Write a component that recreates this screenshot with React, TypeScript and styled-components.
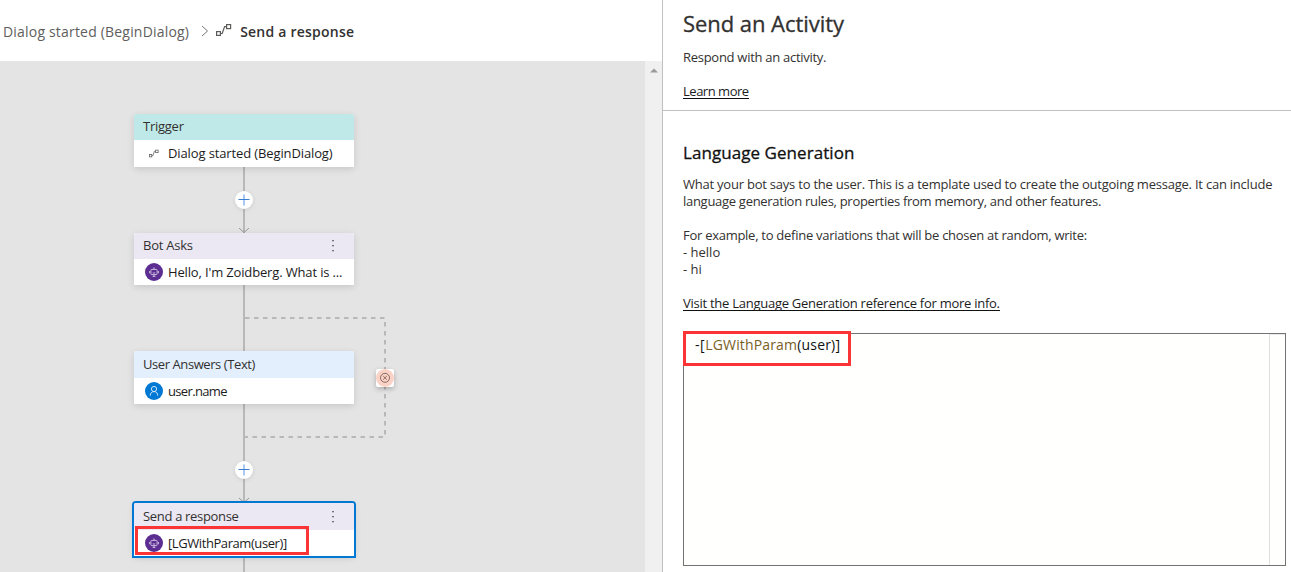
import React from "react";
import styled, { createGlobalStyle } from "styled-components";

const Global = createGlobalStyle`
  * { box-sizing: border-box; }
  body { margin: 0; background: #fff; overflow: hidden; }
`;

const ui = `"Segoe UI", "Open Sans", "Noto Sans", sans-serif`;

const Shell = styled.div`
  display: flex;
  width: 1291px;
  height: 572px;
  overflow: hidden;
  font-family: ${ui};
  color: #323130;
`;

const Editor = styled.section`
  display: flex;
  flex-direction: column;
  width: 662px;
  flex: none;
`;

const Breadcrumbs = styled.nav`
  display: flex;
  align-items: center;
  height: 61px;
  padding: 2px 0 0 3px;
`;

const Text = styled.span<{ $size?: number; $ls?: number; $weight?: number; $color?: string; $stroke?: number }>`
  font-size: ${(p) => p.$size ?? 13}px;
  letter-spacing: ${(p) => p.$ls ?? 0}px;
  font-weight: ${(p) => p.$weight ?? 400};
  color: ${(p) => p.$color ?? "inherit"};
  -webkit-text-stroke: ${(p) => p.$stroke ?? 0}px currentColor;
  white-space: pre;
`;

const CrumbChevron = styled.svg`
  flex: none;
  margin: 0 7px 2px 12px;
`;

const CrumbIcon = styled.svg`
  flex: none;
  margin: 0 8px 3px 0;
`;

const Work = styled.div`
  display: flex;
  flex: 1;
`;

const Canvas = styled.div`
  position: relative;
  width: 645px;
  background: #e4e4e4;
  overflow: hidden;
`;

const ScrollTrack = styled.div`
  display: flex;
  justify-content: center;
  width: 17px;
  padding-top: 7px;
  background: #f0f0f0;
`;

const Edges = styled.svg`
  position: absolute;
  left: 0;
  top: 0;
`;

const Node = styled.article<{ $top: number; $selected?: boolean }>`
  position: absolute;
  left: 134px;
  top: ${(p) => p.$top}px;
  width: 220px;
  border-radius: 2px 2px 0 0;
  background: #fff;
  box-shadow: ${(p) => (p.$selected ? "0 0 0 2px #0078d4, " : "")}0 2px 7px rgba(0, 0, 0, 0.13);
`;

const NodeHeader = styled.header<{ $bg: string; $h: number }>`
  display: flex;
  align-items: center;
  justify-content: space-between;
  height: ${(p) => p.$h}px;
  padding: 0 18px 2px 9px;
  border-radius: 2px 2px 0 0;
  background: ${(p) => p.$bg};
`;

const NodeBody = styled.div<{ $h: number }>`
  display: flex;
  align-items: center;
  height: ${(p) => p.$h}px;
  padding: 0 0 ${(p) => p.$h - 26}px 11px;
  gap: 5px;
  color: #1c1c1c;
`;

const IconSlot = styled.span`
  display: flex;
  align-items: center;
  justify-content: center;
  width: 18px;
  height: 18px;
  flex: none;
`;

const AddButton = styled.button<{ $top: number }>`
  position: absolute;
  left: 235px;
  top: ${(p) => p.$top}px;
  display: flex;
  width: 18px;
  height: 18px;
  padding: 0;
  border: 0;
  border-radius: 50%;
  background: #fff;
  box-shadow: 0 1px 4px rgba(0, 0, 0, 0.1);
`;

const ErrorNode = styled.div`
  position: absolute;
  left: 376px;
  top: 308px;
  display: flex;
  width: 18px;
  height: 18px;
  border-radius: 2px;
  background: #fff;
  box-shadow: 0 2px 5px rgba(0, 0, 0, 0.25);
`;

const Highlight = styled.div<{ $x: number; $y: number; $w: number; $h: number }>`
  position: absolute;
  left: ${(p) => p.$x}px;
  top: ${(p) => p.$y}px;
  width: ${(p) => p.$w}px;
  height: ${(p) => p.$h}px;
  border: 3px solid #fb3435;
`;

const Panel = styled.aside`
  display: flex;
  flex-direction: column;
  flex: 1;
  min-width: 0;
  border-left: 1px solid #c0c0c0;
`;

const PanelHeader = styled.header`
  display: flex;
  flex-direction: column;
  align-items: flex-start;
  height: 111px;
  padding: 8px 20px 0;
  border-bottom: 1px solid #c0c0c0;
`;

const PanelTitle = styled.h1`
  display: flex;
  margin: 0 0 11px;
  font-size: 22px;
  line-height: 30px;
`;

const Line = styled.div<{ $gap?: number; $link?: boolean }>`
  display: flex;
  height: 17px;
  line-height: 17px;
  margin-bottom: ${(p) => p.$gap ?? 0}px;
  color: ${(p) => (p.$link ? "#1c1c1c" : "#323130")};
  ${(p) => p.$link && "border-bottom: 1px solid #111; height: 16px;"}
`;

const PanelBody = styled.div`
  display: flex;
  flex-direction: column;
  align-items: flex-start;
  padding: 32px 0 0 20px;
`;

const SectionTitle = styled.h2`
  display: flex;
  margin: 0 0 13px;
  font-size: 17px;
  line-height: 20px;
  color: #111;
`;

const CodeEditor = styled.div`
  position: relative;
  display: flex;
  width: 603px;
  height: 233px;
  margin-top: 22px;
  border: 1px solid #737373;
  background: #fffffe;
`;

const Code = styled.code`
  flex: 1;
  padding: 0 0 0 11px;
  font-family: ${ui};
  line-height: 21px;
  color: #111;
`;

const Ruler = styled.div`
  width: 16px;
  border-left: 1px solid #e0e0e0;
  border-top: 1px solid #eaeaea;
`;

const FlowIcon = () => (
  <g fill="none" stroke="#5c5b5a" strokeWidth="1.2">
    <rect x="0.6" y="8.6" width="3.8" height="3.8" />
    <rect x="10.6" y="1.6" width="4" height="4" />
    <path d="M4.5 10.5H6.2L8.6 3.6H10.5" />
  </g>
);

const BotIcon = () => (
  <svg width="18" height="18" viewBox="0 0 18 18">
    <circle cx="9" cy="9" r="9" fill="#5c2e91" />
    <g fill="none" stroke="#d9cbe8" strokeWidth="0.9">
      <rect x="5.9" y="6.4" width="6.2" height="5.2" rx="0.8" />
      <path d="M9 4.4v2M4.6 8v2.2M13.4 8v2.2M7.8 9.8q1.2.8 2.4 0M7.6 13.4h2.8M9 11.6v1.8" />
    </g>
  </svg>
);

const UserIcon = () => (
  <svg width="18" height="18" viewBox="0 0 18 18">
    <circle cx="9" cy="9" r="9" fill="#0078d4" />
    <g fill="none" stroke="#d6e9f8" strokeWidth="0.95">
      <circle cx="9" cy="7" r="2.6" />
      <path d="M5.2 13.6c.1-2.5 1.6-4 3.8-4s3.7 1.5 3.8 4" />
    </g>
  </svg>
);

const MoreIcon = () => (
  <svg width="6" height="14" viewBox="0 0 6 14" fill="#55535a">
    <rect x="2.2" y="2" width="1.6" height="1.3" />
    <rect x="2.2" y="7" width="1.6" height="1.3" />
    <rect x="2.2" y="12" width="1.6" height="1.3" />
  </svg>
);

const Plus = () => (
  <svg width="18" height="18" viewBox="0 0 18 18">
    <path d="M9 3.5v11" stroke="#a9c9f2" strokeWidth="2" />
    <path d="M3.5 8.5h11" stroke="#3b7fd4" strokeWidth="1" />
  </svg>
);

export default function App() {
  return (
    <Shell>
      <Global />
      <Editor>
        <Breadcrumbs>
          <Text $size={14} $ls={0.19} $color="#605e5c">Dialog started (BeginDialog)</Text>
          <CrumbChevron width="8" height="12" viewBox="0 0 8 12">
            <path d="M1 1l5.5 5L1 11" fill="none" stroke="#777" />
          </CrumbChevron>
          <CrumbIcon width="16" height="14" viewBox="0 0 16 14"><FlowIcon /></CrumbIcon>
          <Text $size={14} $ls={0.23} $weight={600}>Send a response</Text>
        </Breadcrumbs>
        <Work>
          <Canvas>
            <Edges width="645" height="511">
              <g fill="none" stroke="#b8b8b8" strokeWidth="2">
                <path d="M244 106V172M244 224V290M244 343V441M244 496V511" />
                <path d="M239 167L244 171.5L249 167M239 437L244 441.5L249 437" stroke="#999" strokeWidth="1" />
                <path d="M245 257H385V376H245" strokeDasharray="4.5 4.5" />
              </g>
            </Edges>
            <Node $top={53}>
              <NodeHeader $bg="#bfe9e8" $h={26}><Text $ls={-0.25}>Trigger</Text></NodeHeader>
              <NodeBody $h={27}>
                <IconSlot><svg width="10" height="9" viewBox="0 0 16 14"><FlowIcon /></svg></IconSlot>
                <Text $ls={-0.12}>Dialog started (BeginDialog)</Text>
              </NodeBody>
            </Node>
            <Node $top={172}>
              <NodeHeader $bg="#ece8f3" $h={26}><Text $ls={-0.25}>Bot Asks</Text><MoreIcon /></NodeHeader>
              <NodeBody $h={26}>
                <IconSlot><BotIcon /></IconSlot>
                <Text $ls={-0.15}>Hello, I'm Zoidberg. What is ...</Text>
              </NodeBody>
            </Node>
            <Node $top={290}>
              <NodeHeader $bg="#e3effd" $h={27}><Text $ls={-0.42}>User Answers (Text)</Text></NodeHeader>
              <NodeBody $h={26}>
                <IconSlot><UserIcon /></IconSlot>
                <Text $ls={-0.65}>user.name</Text>
              </NodeBody>
            </Node>
            <Node $top={442} $selected>
              <NodeHeader $bg="#ece8f3" $h={27}><Text $ls={-0.32}>Send a response</Text><MoreIcon /></NodeHeader>
              <NodeBody $h={26}>
                <IconSlot><BotIcon /></IconSlot>
                <Text $ls={-0.42}>[LGWithParam(user)]</Text>
              </NodeBody>
            </Node>
            <AddButton $top={130}><Plus /></AddButton>
            <AddButton $top={400}><Plus /></AddButton>
            <ErrorNode>
              <svg width="18" height="18" viewBox="0 0 18 18">
                <circle cx="9" cy="9" r="9" fill="#fbd3c6" />
                <circle cx="9" cy="8.8" r="4.5" fill="none" stroke="#6b4f47" strokeWidth="0.8" />
                <path d="M7.2 7l3.6 3.6M10.8 7L7.2 10.6" stroke="#6b4f47" strokeWidth="0.8" />
              </svg>
            </ErrorNode>
            <Highlight $x={135} $y={465} $w={174} $h={29} />
          </Canvas>
          <ScrollTrack>
            <svg width="8" height="5" viewBox="0 0 8 5"><path d="M0 4.5L4 .5L8 4.5Z" fill="#9a9a9a" /></svg>
          </ScrollTrack>
        </Work>
      </Editor>
      <Panel>
        <PanelHeader>
          <PanelTitle><Text $size={22} $ls={-0.05} $stroke={0.3}>Send an Activity</Text></PanelTitle>
          <Line $gap={17}><Text $ls={-0.28}>Respond with an activity.</Text></Line>
          <Line $link><Text $ls={-0.48}>Learn more</Text></Line>
        </PanelHeader>
        <PanelBody>
          <SectionTitle><Text $size={17} $ls={0.06} $stroke={0.3}>Language Generation</Text></SectionTitle>
          <Line><Text $ls={-0.225}>What your bot says to the user. This is a template used to create the outgoing message. It can include</Text></Line>
          <Line $gap={17}><Text $ls={-0.29}>language generation rules, properties from memory, and other features.</Text></Line>
          <Line><Text $ls={-0.27}>For example, to define variations that will be chosen at random, write:</Text></Line>
          <Line><Text>- hello</Text></Line>
          <Line $gap={17}><Text>- hi</Text></Line>
          <Line $link><Text $ls={-0.26}>Visit the Language Generation reference for more info.</Text></Line>
          <CodeEditor>
            <Code><Text $size={14} $ls={0.2}><Text $size={14} $ls={0.6}>-[</Text><Text $size={14} $ls={0.15} $color="#795e26">LGWithParam</Text>(user)]</Text></Code>
            <Ruler />
            <Highlight $x={-1} $y={-3} $w={168} $h={35} />
          </CodeEditor>
        </PanelBody>
      </Panel>
    </Shell>
  );
}
